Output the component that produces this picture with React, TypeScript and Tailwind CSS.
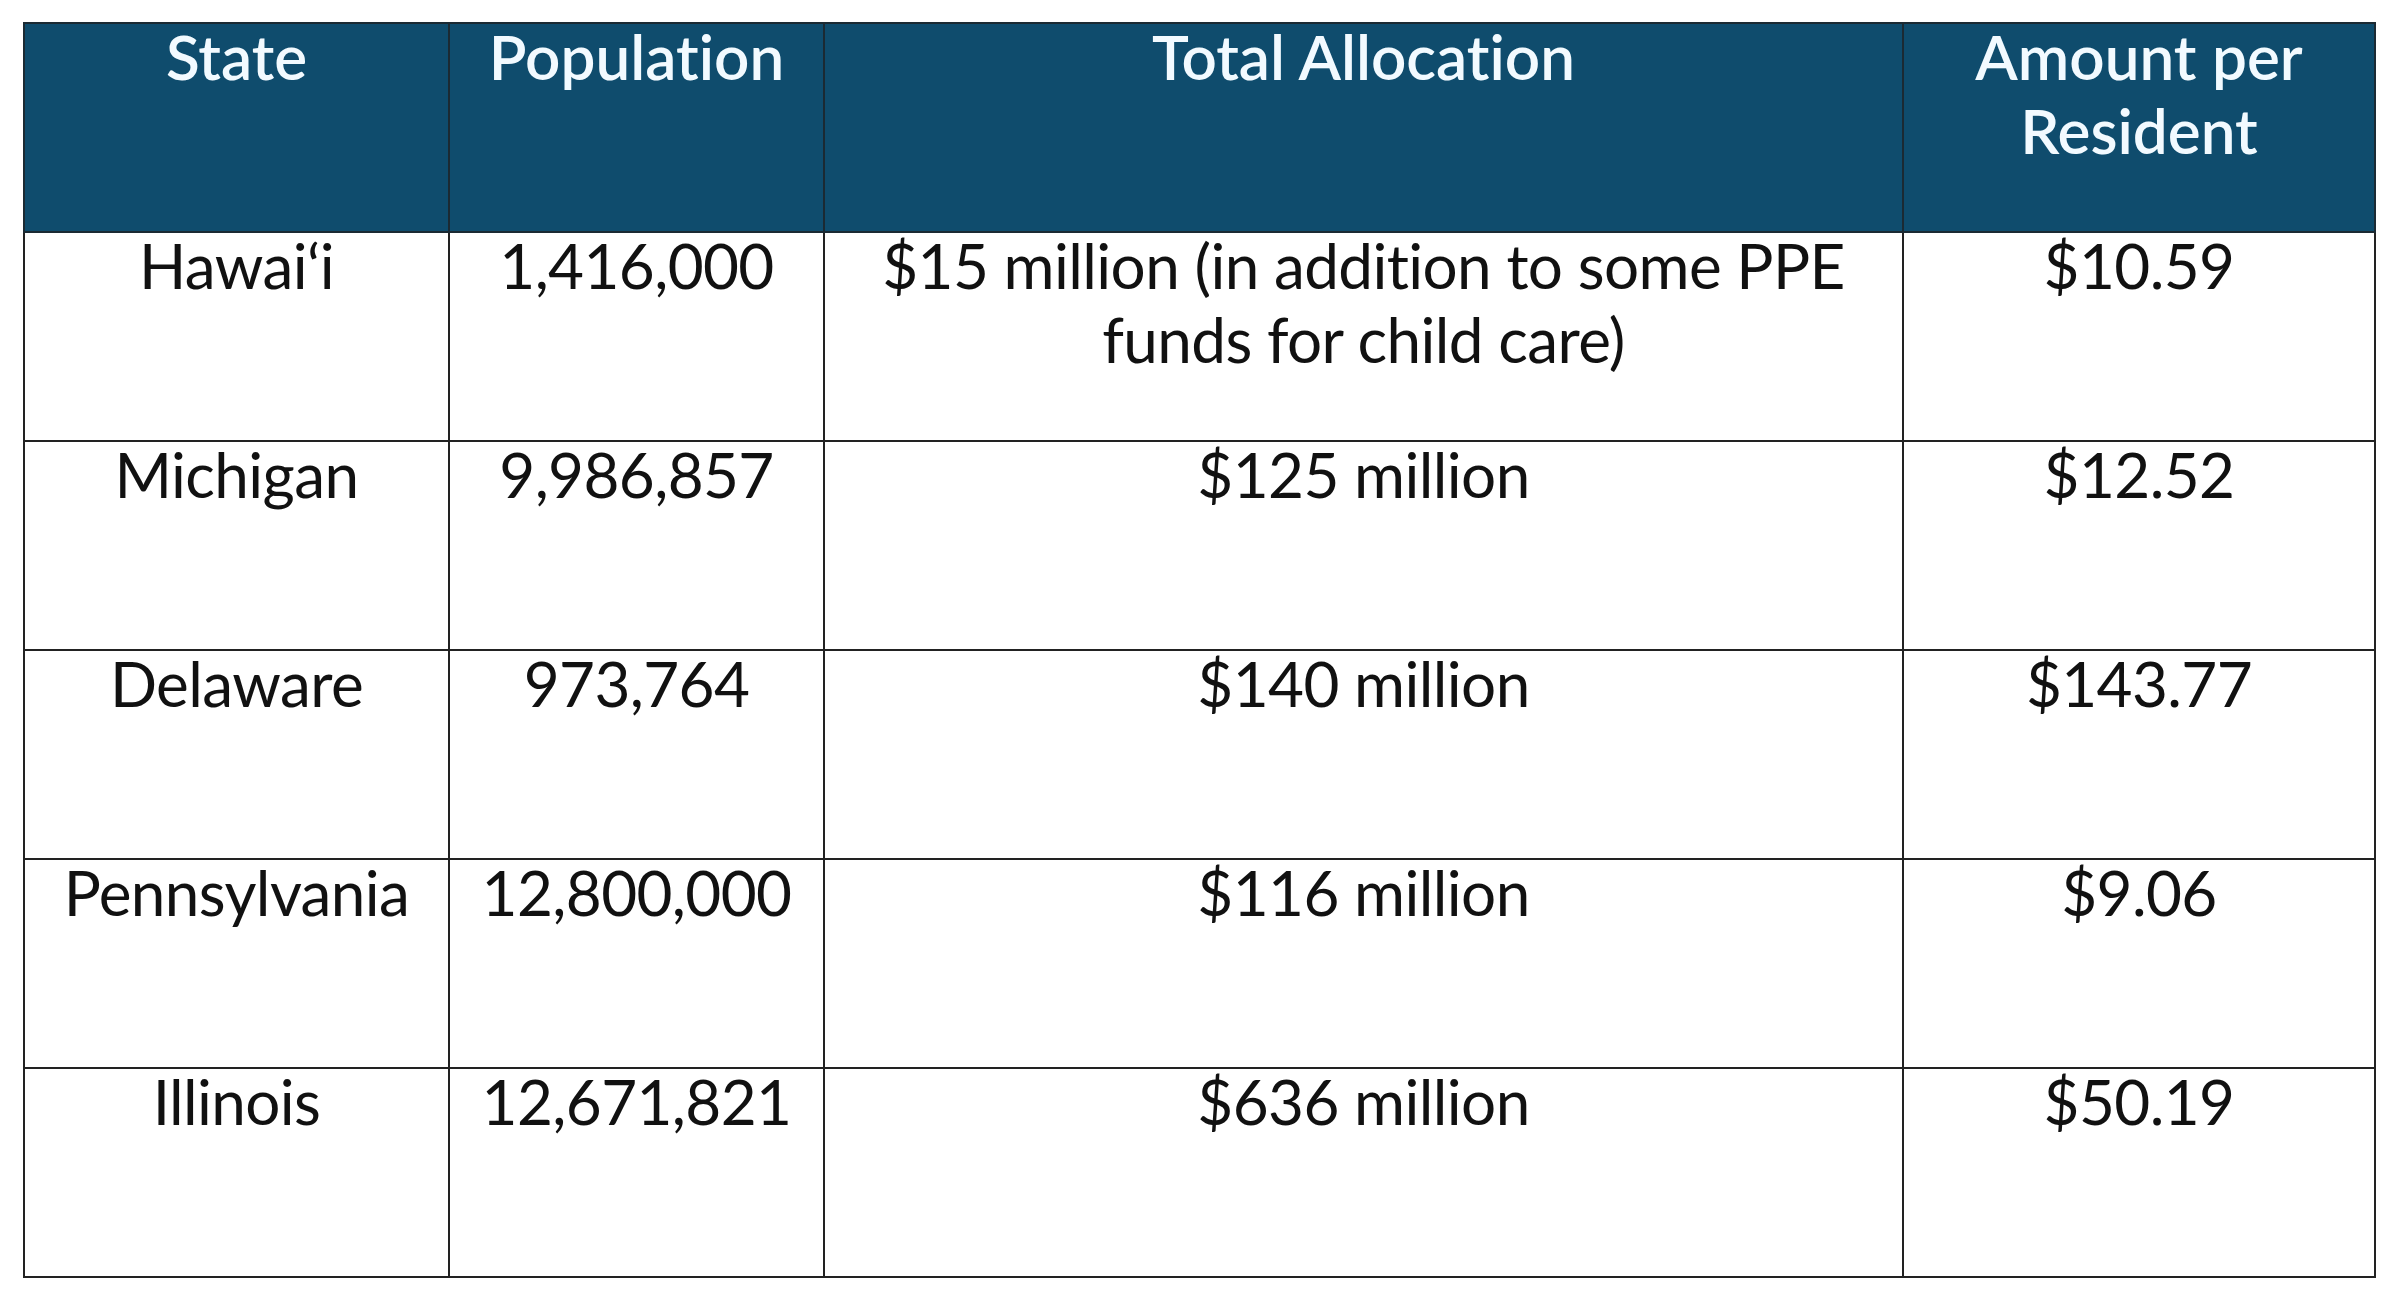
import React from 'react';

// ============================================================================
// Data
// ============================================================================

interface Row {
  state: string;
  population: string;
  allocation: string[];
  perResident: string;
}

const rows: Row[] = [
  {
    state: 'Hawai\u2018i',
    population: '1,416,000',
    allocation: ['$15 million (in addition to some PPE', 'funds for child care)'],
    perResident: '$10.59',
  },
  { state: 'Michigan', population: '9,986,857', allocation: ['$125 million'], perResident: '$12.52' },
  { state: 'Delaware', population: '973,764', allocation: ['$140 million'], perResident: '$143.77' },
  { state: 'Pennsylvania', population: '12,800,000', allocation: ['$116 million'], perResident: '$9.06' },
  { state: 'Illinois', population: '12,671,821', allocation: ['$636 million'], perResident: '$50.19' },
];

const headers: string[][] = [['State'], ['Population'], ['Total Allocation'], ['Amount per', 'Resident']];

// ============================================================================
// Cell
// ============================================================================

const CellText: React.FC<{ lines: string[] }> = ({ lines }) => (
  <div className="-mt-[5px]">
    {lines.map((line, i) => (
      <div key={i} className="whitespace-nowrap">
        {line}
      </div>
    ))}
  </div>
);

// ============================================================================
// App
// ============================================================================

export default function App() {
  return (
    <div
      className="w-[2398px] h-[1302px] bg-white pl-[23px] pt-[22px] [font-variant-ligatures:none]"
      style={{ fontFamily: 'Lato, "Open Sans", sans-serif' }}
    >
      <table className="table-fixed border-collapse w-[2351px] text-[62px] leading-[74px]">
        <colgroup>
          <col className="w-[425px]" />
          <col className="w-[375px]" />
          <col className="w-[1079px]" />
          <col className="w-[472px]" />
        </colgroup>
        <thead>
          <tr className="h-[209px]">
            {headers.map((h, i) => (
              <th
                key={i}
                className="border-2 border-[#1b2a33] bg-[#0f4c6d] text-[#f2faff] font-semibold text-center align-top p-0"
              >
                <CellText lines={h} />
              </th>
            ))}
          </tr>
        </thead>
        <tbody>
          {rows.map((r) => (
            <tr key={r.state} className="h-[209px] text-[#111111] tracking-[-0.6px]">
              <td className="border-2 border-[#222222] text-center align-top p-0">
                <CellText lines={[r.state]} />
              </td>
              <td className="border-2 border-[#222222] text-center align-top p-0">
                <CellText lines={[r.population]} />
              </td>
              <td className="border-2 border-[#222222] text-center align-top p-0">
                <CellText lines={r.allocation} />
              </td>
              <td className="border-2 border-[#222222] text-center align-top p-0">
                <CellText lines={[r.perResident]} />
              </td>
            </tr>
          ))}
        </tbody>
      </table>
    </div>
  );
}
